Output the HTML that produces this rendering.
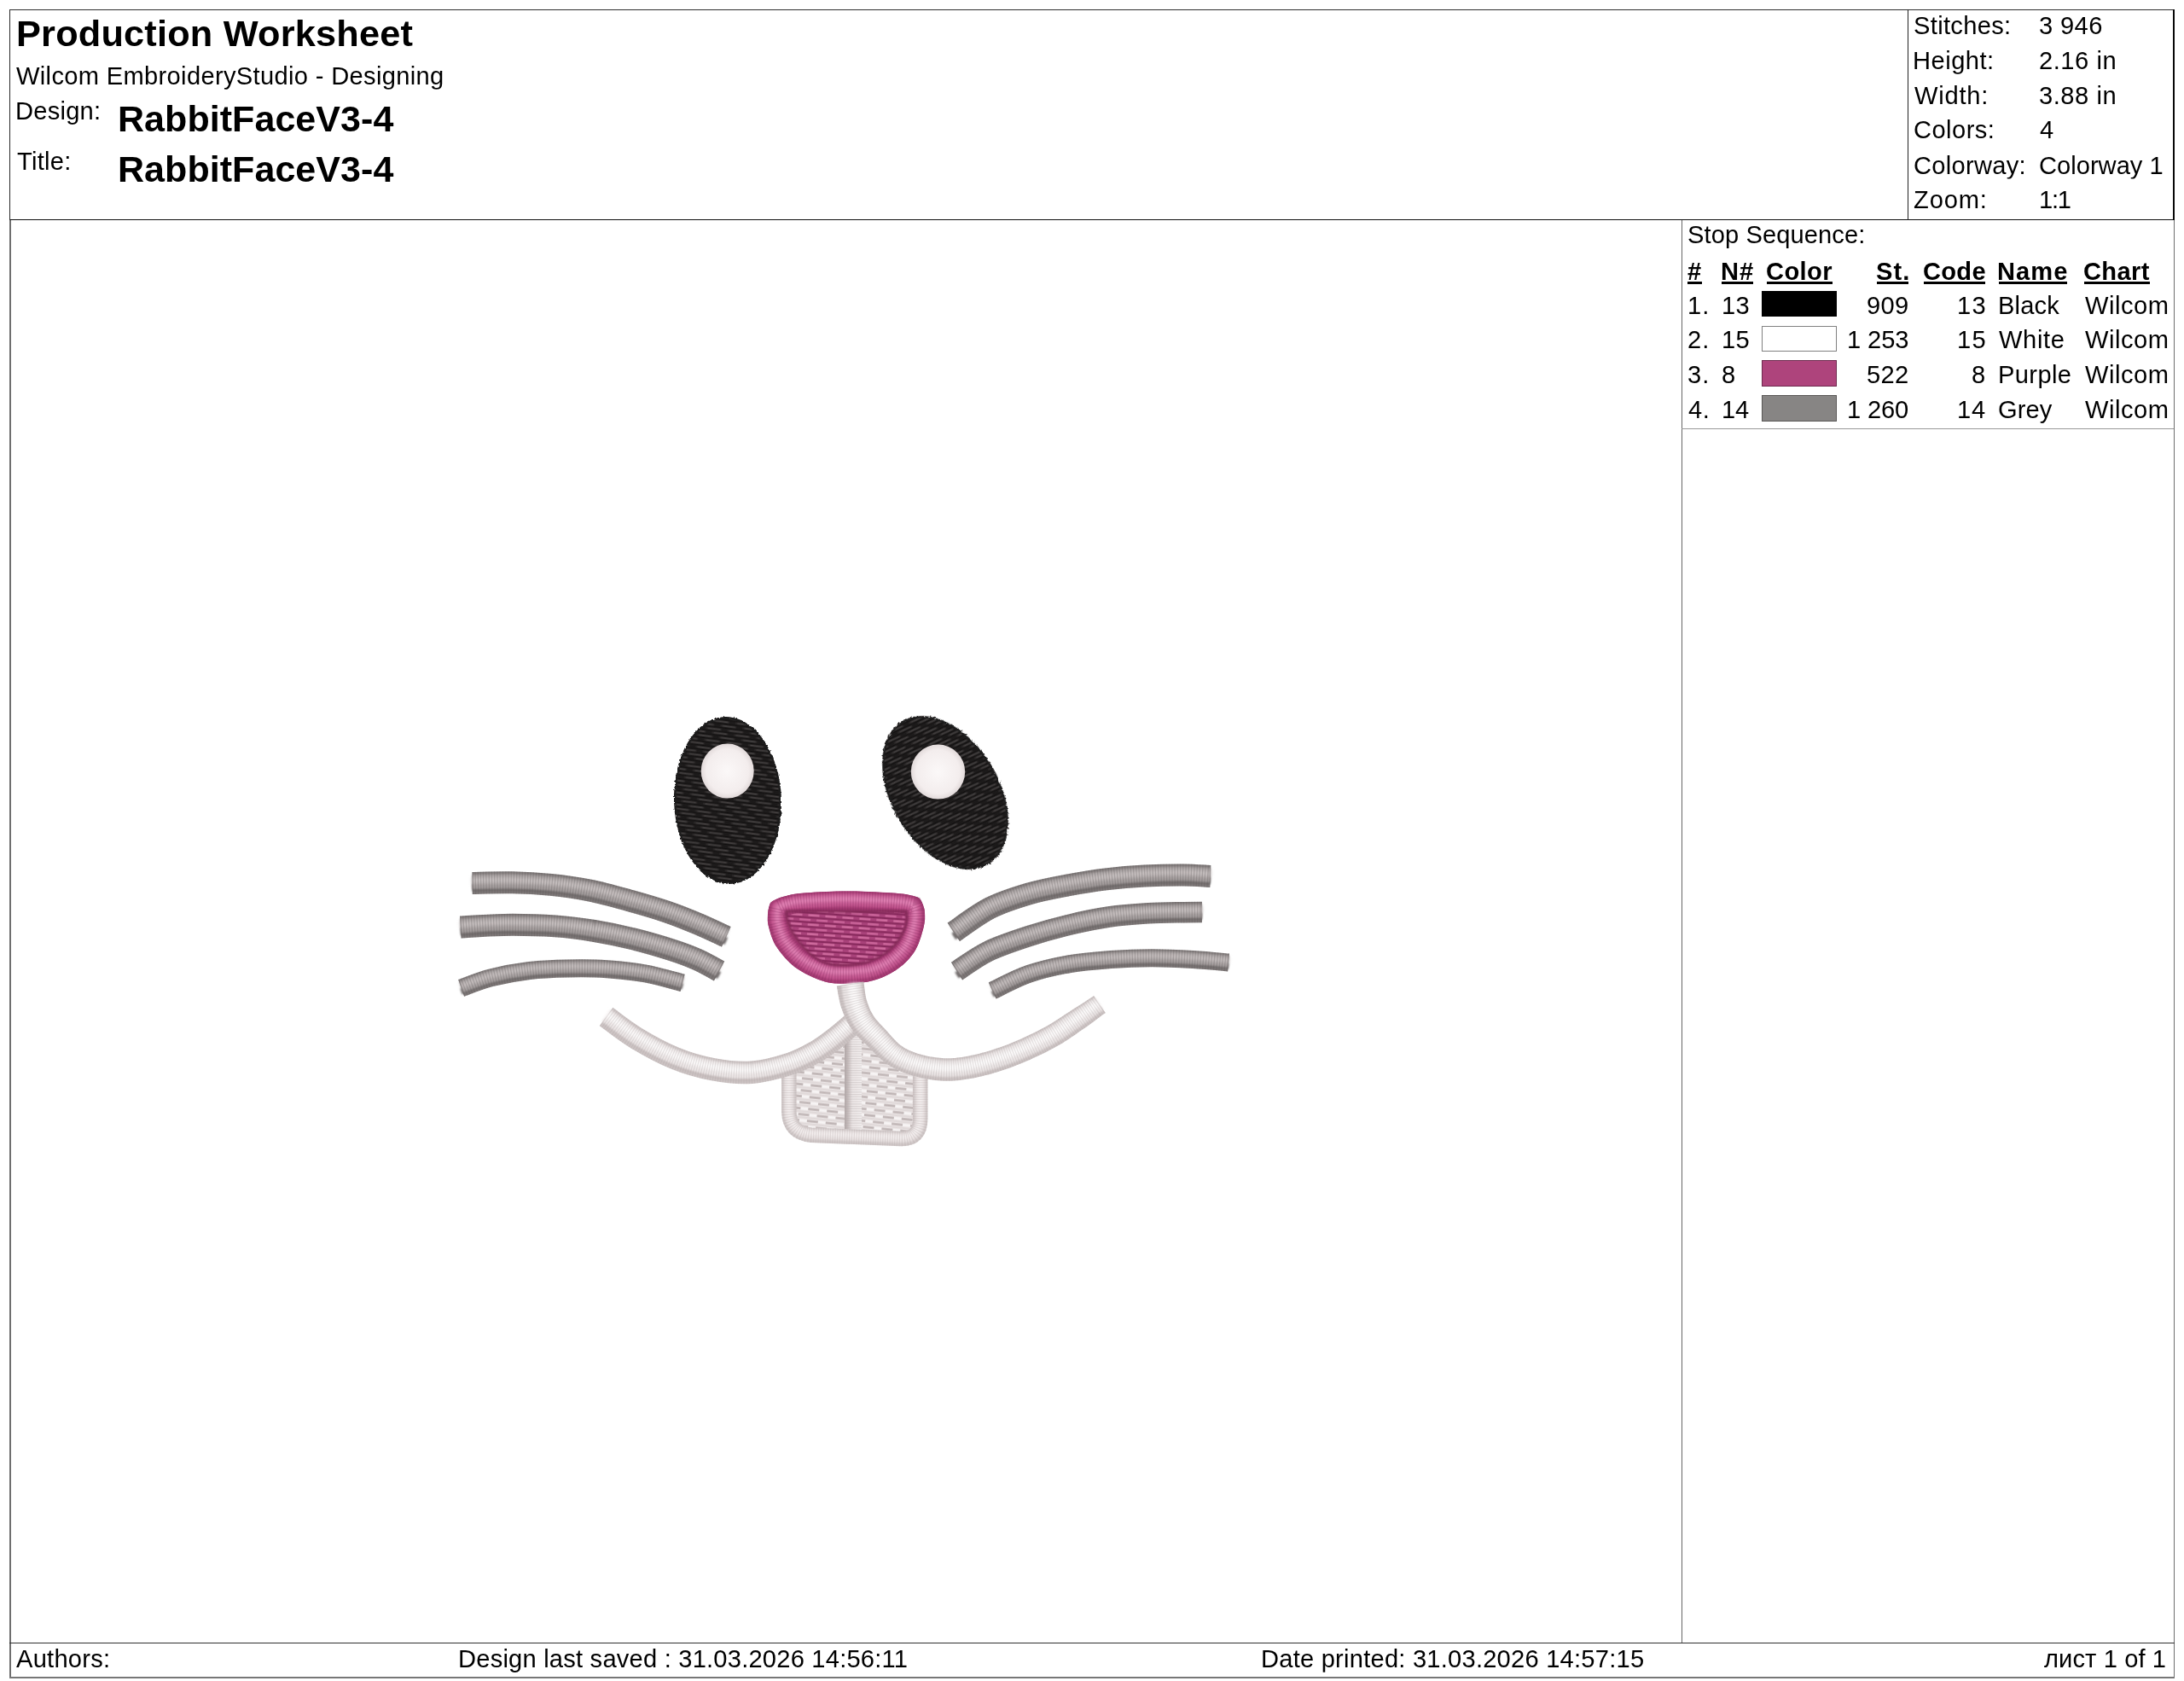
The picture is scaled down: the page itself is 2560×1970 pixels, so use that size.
<!DOCTYPE html>
<html lang="en">
<head>
<meta charset="utf-8">
<title>Production Worksheet</title>
<style>
html,body{margin:0;padding:0;background:#fff;}
body{width:2560px;height:1970px;position:relative;overflow:hidden;font-family:"Liberation Sans",Arial,sans-serif;color:#000;}
.t{position:absolute;line-height:1;white-space:pre;will-change:transform;}
.ln{position:absolute;background:#222;}
.sw{position:absolute;left:2065.4px;width:87.7px;height:30.6px;border:1.2px solid #000;box-sizing:border-box;}
svg.design{position:absolute;left:0;top:0;}
</style>
</head>
<body>
<!-- frame lines -->
<div class="ln" style="left:10.9px;top:10.85px;width:2538.1px;height:1.4px;background:#2e2e2e"></div>
<div class="ln" style="left:10.9px;top:256.6px;width:2538.1px;height:1.5px;background:#0c0c0c"></div>
<div class="ln" style="left:10.9px;top:10.85px;width:1.5px;height:247px;background:#2a2a2a"></div>
<div class="ln" style="left:2547.45px;top:10.85px;width:1.5px;height:247px;background:#080808"></div>
<div class="ln" style="left:2235.7px;top:10.85px;width:1.5px;height:247px;background:#222"></div>
<div class="ln" style="left:11.2px;top:258px;width:1.4px;height:1708.6px;background:#6e6e6e"></div>
<div class="ln" style="left:2547.7px;top:258px;width:1.4px;height:1708.6px;background:#6e6e6e"></div>
<div class="ln" style="left:1970.55px;top:258px;width:1.4px;height:1667px;background:#666"></div>
<div class="ln" style="left:1971px;top:501.8px;width:577px;height:1.3px;background:#999"></div>
<div class="ln" style="left:11.2px;top:1924.85px;width:2537.9px;height:1.5px;background:#2e2e2e"></div>
<div class="ln" style="left:11.2px;top:1964.95px;width:2537.9px;height:1.7px;background:#777"></div>
<!-- text -->
<div class="t" style="top:18px;font-size:43.3px;transform:translateY(0.45px);left:18.53px;font-weight:bold;letter-spacing:0.199px;">Production Worksheet</div>
<div class="t" style="top:74px;font-size:29.1px;transform:translateY(0.70px);left:19.33px;letter-spacing:0.333px;">Wilcom EmbroideryStudio - Designing</div>
<div class="t" style="top:115px;font-size:29.1px;transform:translateY(0.90px);left:18.19px;letter-spacing:0.246px;">Design:</div>
<div class="t" style="top:118px;font-size:43.0px;transform:translateY(0.30px);left:137.58px;font-weight:bold;letter-spacing:0.055px;">RabbitFaceV3-4</div>
<div class="t" style="top:175px;font-size:29.1px;left:20.42px;letter-spacing:0.250px;">Title:</div>
<div class="t" style="top:177px;font-size:43.0px;transform:translateY(0.20px);left:137.58px;font-weight:bold;letter-spacing:0.055px;">RabbitFaceV3-4</div>
<div class="t" style="top:16px;font-size:29.1px;left:2242.74px;letter-spacing:0.321px;">Stitches:</div>
<div class="t" style="top:16px;font-size:29.1px;left:2389.74px;letter-spacing:0.387px;">3 946</div>
<div class="t" style="top:56px;font-size:29.1px;transform:translateY(0.80px);left:2242.19px;letter-spacing:0.494px;">Height:</div>
<div class="t" style="top:56px;font-size:29.1px;transform:translateY(0.80px);left:2389.56px;letter-spacing:0.541px;">2.16 in</div>
<div class="t" style="top:97px;font-size:29.1px;transform:translateY(0.50px);left:2243.93px;letter-spacing:0.771px;">Width:</div>
<div class="t" style="top:97px;font-size:29.1px;transform:translateY(0.50px);left:2389.74px;letter-spacing:0.551px;">3.88 in</div>
<div class="t" style="top:138px;font-size:29.1px;transform:translateY(0.40px);left:2242.78px;letter-spacing:0.463px;">Colors:</div>
<div class="t" style="top:138px;font-size:29.1px;transform:translateY(0.40px);left:2390.98px;">4</div>
<div class="t" style="top:179px;font-size:29.1px;transform:translateY(0.50px);left:2242.78px;letter-spacing:0.295px;">Colorway:</div>
<div class="t" style="top:179px;font-size:29.1px;transform:translateY(0.50px);left:2390.38px;letter-spacing:0.018px;">Colorway 1</div>
<div class="t" style="top:220px;font-size:29.1px;left:2243.04px;letter-spacing:0.855px;">Zoom:</div>
<div class="t" style="top:220px;font-size:29.1px;left:2390.28px;letter-spacing:-1.197px;">1:1</div>
<div class="t" style="top:261px;font-size:29.1px;transform:translateY(0.20px);left:1977.54px;letter-spacing:0.099px;">Stop Sequence:</div>
<div class="t u" style="top:303px;font-size:29.1px;transform:translateY(0.90px);left:1977.87px;font-weight:bold;">#</div>
<div class="ln" style="left:1978.0px;top:329.8px;width:16.9px;height:3px;background:#000"></div>
<div class="t u" style="top:303px;font-size:29.1px;transform:translateY(0.90px);left:2017.20px;font-weight:bold;letter-spacing:1.035px;">N#</div>
<div class="ln" style="left:2018.2px;top:329.8px;width:37.0px;height:3px;background:#000"></div>
<div class="t u" style="top:303px;font-size:29.1px;transform:translateY(0.90px);left:2070.45px;font-weight:bold;letter-spacing:0.390px;">Color</div>
<div class="ln" style="left:2070.7px;top:329.8px;width:77.0px;height:3px;background:#000"></div>
<div class="t u" style="top:303px;font-size:29.1px;transform:translateY(0.90px);left:2198.94px;font-weight:bold;letter-spacing:1.018px;">St.</div>
<div class="ln" style="left:2199.6px;top:329.8px;width:37.0px;height:3px;background:#000"></div>
<div class="t u" style="top:303px;font-size:29.1px;transform:translateY(0.90px);left:2254.25px;font-weight:bold;letter-spacing:0.283px;">Code</div>
<div class="ln" style="left:2254.9px;top:329.8px;width:72.3px;height:3px;background:#000"></div>
<div class="t u" style="top:303px;font-size:29.1px;transform:translateY(0.90px);left:2341.20px;font-weight:bold;letter-spacing:1.041px;">Name</div>
<div class="ln" style="left:2342.7px;top:329.8px;width:80.4px;height:3px;background:#000"></div>
<div class="t u" style="top:303px;font-size:29.1px;transform:translateY(0.90px);left:2441.85px;font-weight:bold;letter-spacing:0.358px;">Chart</div>
<div class="ln" style="left:2442.8px;top:329.8px;width:77.0px;height:3px;background:#000"></div>
<div class="t" style="top:343px;font-size:29.1px;transform:translateY(0.60px);left:1977.68px;letter-spacing:0.965px;">1.</div>
<div class="t" style="top:343px;font-size:29.1px;transform:translateY(0.60px);left:2018.48px;letter-spacing:0.331px;">13</div>
<div class="t" style="top:343px;font-size:29.1px;transform:translateY(0.60px);left:2188.18px;letter-spacing:0.337px;">909</div>
<div class="t" style="top:343px;font-size:29.1px;transform:translateY(0.60px);left:2294.28px;letter-spacing:1.331px;">13</div>
<div class="t" style="top:343px;font-size:29.1px;transform:translateY(0.60px);left:2342.19px;letter-spacing:0.151px;">Black</div>
<div class="t" style="top:343px;font-size:29.1px;transform:translateY(0.60px);left:2443.93px;letter-spacing:0.518px;">Wilcom</div>
<div class="t" style="top:384px;font-size:29.1px;transform:translateY(0.20px);left:1977.76px;letter-spacing:1.082px;">2.</div>
<div class="t" style="top:384px;font-size:29.1px;transform:translateY(0.20px);left:2018.48px;letter-spacing:0.280px;">15</div>
<div class="t" style="top:384px;font-size:29.1px;transform:translateY(0.20px);left:2165.08px;letter-spacing:-0.078px;">1 253</div>
<div class="t" style="top:384px;font-size:29.1px;transform:translateY(0.20px);left:2294.28px;letter-spacing:1.280px;">15</div>
<div class="t" style="top:384px;font-size:29.1px;transform:translateY(0.20px);left:2343.33px;letter-spacing:0.652px;">White</div>
<div class="t" style="top:384px;font-size:29.1px;transform:translateY(0.20px);left:2443.93px;letter-spacing:0.518px;">Wilcom</div>
<div class="t" style="top:425px;font-size:29.1px;left:1977.94px;letter-spacing:1.145px;">3.</div>
<div class="t" style="top:425px;font-size:29.1px;left:2017.91px;">8</div>
<div class="t" style="top:425px;font-size:29.1px;left:2188.00px;letter-spacing:0.359px;">522</div>
<div class="t" style="top:425px;font-size:29.1px;left:2310.91px;">8</div>
<div class="t" style="top:425px;font-size:29.1px;left:2342.19px;letter-spacing:0.384px;">Purple</div>
<div class="t" style="top:425px;font-size:29.1px;left:2443.93px;letter-spacing:0.518px;">Wilcom</div>
<div class="t" style="top:465px;font-size:29.1px;transform:translateY(0.90px);left:1978.58px;letter-spacing:0.592px;">4.</div>
<div class="t" style="top:465px;font-size:29.1px;transform:translateY(0.90px);left:2018.48px;letter-spacing:-0.198px;">14</div>
<div class="t" style="top:465px;font-size:29.1px;transform:translateY(0.90px);left:2165.08px;letter-spacing:-0.160px;">1 260</div>
<div class="t" style="top:465px;font-size:29.1px;transform:translateY(0.90px);left:2294.28px;letter-spacing:0.802px;">14</div>
<div class="t" style="top:465px;font-size:29.1px;transform:translateY(0.90px);left:2341.61px;letter-spacing:0.058px;">Grey</div>
<div class="t" style="top:465px;font-size:29.1px;transform:translateY(0.90px);left:2443.93px;letter-spacing:0.518px;">Wilcom</div>
<div class="t" style="top:1929px;font-size:29.1px;transform:translateY(0.70px);left:18.94px;letter-spacing:0.248px;">Authors:</div>
<div class="t" style="top:1929px;font-size:29.1px;transform:translateY(0.70px);left:537.39px;letter-spacing:0.218px;">Design last saved : 31.03.2026 14:56:11</div>
<div class="t" style="top:1929px;font-size:29.1px;transform:translateY(0.70px);left:1478.19px;letter-spacing:0.233px;">Date printed: 31.03.2026 14:57:15</div>
<div class="t" style="top:1929px;font-size:29.1px;transform:translateY(0.70px);left:2396.47px;letter-spacing:0.097px;">лист 1 of 1</div>
<!-- swatches -->
<div class="sw" style="top:340.6px;background:#000000;border-color:#000000"></div>
<div class="sw" style="top:381.5px;background:#ffffff;border-color:#808080"></div>
<div class="sw" style="top:422.1px;background:#ae447c;border-color:#6e2a4e"></div>
<div class="sw" style="top:463.05px;background:#878584;border-color:#595756"></div>
<!-- design -->
<svg class="design" width="2560" height="1970" viewBox="0 0 2560 1970">
<defs>
<filter id="b2" filterUnits="userSpaceOnUse" x="480" y="780" width="1040" height="620"><feGaussianBlur stdDeviation="2"/></filter>
<filter id="b1" filterUnits="userSpaceOnUse" x="480" y="780" width="1040" height="620"><feGaussianBlur stdDeviation="1"/></filter>
<filter id="rough" x="-5%" y="-5%" width="110%" height="110%"><feTurbulence type="fractalNoise" baseFrequency="0.4" numOctaves="1" seed="3" result="n"/><feDisplacementMap in="SourceGraphic" in2="n" scale="4" xChannelSelector="R" yChannelSelector="G"/></filter>
<pattern id="pe1" width="26" height="14" patternUnits="userSpaceOnUse" patternTransform="rotate(9)">
<rect width="26" height="14" fill="#2b2828"/>
<path d="M0 0 L26 0 M0 4.67 L26 4.67 M0 9.33 L26 9.33 M0 14 L26 14" stroke="#0f0d0d" stroke-width="1.7"/>
<path d="M2 2.3 L16 2.3 M11 7 L25 7 M-15 7 L-1 7 M20 11.7 L34 11.7 M-6 11.7 L8 11.7" stroke="#474343" stroke-width="1.5" stroke-linecap="round"/>
<path d="M18 2.3 L25 2.3 M1 7 L8 7 M10 11.7 L17 11.7" stroke="#1b1919" stroke-width="2.2"/>
</pattern>
<pattern id="pe2" width="26" height="14" patternUnits="userSpaceOnUse" patternTransform="rotate(6)">
<rect width="26" height="14" fill="#2b2828"/>
<path d="M0 0 L26 0 M0 4.67 L26 4.67 M0 9.33 L26 9.33 M0 14 L26 14" stroke="#0f0d0d" stroke-width="1.7"/>
<path d="M2 2.3 L16 2.3 M11 7 L25 7 M-15 7 L-1 7 M20 11.7 L34 11.7 M-6 11.7 L8 11.7" stroke="#474343" stroke-width="1.5" stroke-linecap="round"/>
<path d="M18 2.3 L25 2.3 M1 7 L8 7 M10 11.7 L17 11.7" stroke="#1b1919" stroke-width="2.2"/>
</pattern>
<pattern id="pn" width="20" height="11" patternUnits="userSpaceOnUse" patternTransform="rotate(4)">
<rect width="20" height="11" fill="#a9427a"/>
<path d="M0 2.7 L13 2.7" stroke="#d06c9f" stroke-width="2.4"/><path d="M10 8.2 L23 8.2 M-10 8.2 L3 8.2" stroke="#ca6499" stroke-width="2.4"/>
<path d="M0 5.5 L20 5.5 M0 0 L20 0 M0 11 L20 11" stroke="#87295c" stroke-width="1.8"/>
</pattern>
<pattern id="pt" width="22" height="14" patternUnits="userSpaceOnUse" patternTransform="rotate(6)">
<rect width="22" height="14" fill="#ebe5e5"/>
<path d="M0 3.5 L13 3.5" stroke="#bbb1b1" stroke-width="2.4"/><path d="M11 10.5 L24 10.5 M-11 10.5 L2 10.5" stroke="#c0b6b6" stroke-width="2.4"/>
<path d="M13 3.5 L22 3.5 M2 10.5 L11 10.5" stroke="#f8f5f5" stroke-width="2.4"/>
<path d="M0 0 L22 0 M0 7 L22 7 M0 14 L22 14" stroke="#d6cece" stroke-width="1.2"/>
</pattern>
<linearGradient id="dv" x1="0" y1="0" x2="1" y2="0"><stop offset="0" stop-color="#b1a7a7"/><stop offset="0.22" stop-color="#c9c0c0"/><stop offset="0.45" stop-color="#ece6e6"/><stop offset="1" stop-color="#f3efef"/></linearGradient>
<radialGradient id="hl" cx="50%" cy="50%" r="50%"><stop offset="0" stop-color="#fbf8f8"/><stop offset="0.8" stop-color="#f3eded"/><stop offset="1" stop-color="#e2dada"/></radialGradient>
</defs>
<g filter="url(#rough)">
<ellipse cx="853" cy="938" rx="63" ry="98" fill="#1f1d1d" transform="rotate(-2 853 938)"/>
<ellipse cx="1108" cy="929" rx="63" ry="98" fill="#1f1d1d" transform="rotate(-31 1108 929)"/>
</g>
<ellipse cx="853" cy="938" rx="60.5" ry="95.5" fill="url(#pe1)" transform="rotate(-2 853 938)"/>
<ellipse cx="1108" cy="929" rx="60.5" ry="95.5" fill="url(#pe2)" transform="rotate(-31 1108 929)"/>
<ellipse cx="852.7" cy="903.6" rx="31" ry="32" fill="url(#hl)"/>
<ellipse cx="1099.5" cy="904.6" rx="31.7" ry="32" fill="url(#hl)"/>
<path d="M553.6 1034.9C561.4 1034.8 585.0 1034.0 600.4 1034.3C615.8 1034.6 630.7 1035.4 645.8 1036.9C660.9 1038.4 676.0 1040.5 691.1 1043.5C706.2 1046.5 721.3 1050.8 736.4 1055.0C751.5 1059.2 767.9 1063.9 781.8 1068.6C795.6 1073.3 807.9 1078.4 819.5 1083.3C831.1 1088.2 846.0 1095.5 851.3 1097.9" fill="none" stroke="#7f7979" stroke-width="26"/>
<path d="M553.6 1034.9C561.4 1034.8 585.0 1034.0 600.4 1034.3C615.8 1034.6 630.7 1035.4 645.8 1036.9C660.9 1038.4 676.0 1040.5 691.1 1043.5C706.2 1046.5 721.3 1050.8 736.4 1055.0C751.5 1059.2 767.9 1063.9 781.8 1068.6C795.6 1073.3 807.9 1078.4 819.5 1083.3C831.1 1088.2 846.0 1095.5 851.3 1097.9" fill="none" stroke="#6c6666" stroke-width="8.8" transform="translate(0,5.2)" filter="url(#b1)"/>
<path d="M553.6 1034.9C561.4 1034.8 585.0 1034.0 600.4 1034.3C615.8 1034.6 630.7 1035.4 645.8 1036.9C660.9 1038.4 676.0 1040.5 691.1 1043.5C706.2 1046.5 721.3 1050.8 736.4 1055.0C751.5 1059.2 767.9 1063.9 781.8 1068.6C795.6 1073.3 807.9 1078.4 819.5 1083.3C831.1 1088.2 846.0 1095.5 851.3 1097.9" fill="none" stroke="#a29b9b" stroke-width="17.2" transform="translate(0,-1.4)" filter="url(#b1)"/>
<path d="M553.6 1034.9C561.4 1034.8 585.0 1034.0 600.4 1034.3C615.8 1034.6 630.7 1035.4 645.8 1036.9C660.9 1038.4 676.0 1040.5 691.1 1043.5C706.2 1046.5 721.3 1050.8 736.4 1055.0C751.5 1059.2 767.9 1063.9 781.8 1068.6C795.6 1073.3 807.9 1078.4 819.5 1083.3C831.1 1088.2 846.0 1095.5 851.3 1097.9" fill="none" stroke="#c6bfbf" stroke-width="7.8" transform="translate(0,-3.0)" filter="url(#b2)"/>
<path d="M553.6 1034.9C561.4 1034.8 585.0 1034.0 600.4 1034.3C615.8 1034.6 630.7 1035.4 645.8 1036.9C660.9 1038.4 676.0 1040.5 691.1 1043.5C706.2 1046.5 721.3 1050.8 736.4 1055.0C751.5 1059.2 767.9 1063.9 781.8 1068.6C795.6 1073.3 807.9 1078.4 819.5 1083.3C831.1 1088.2 846.0 1095.5 851.3 1097.9" fill="none" stroke="#5a5454" stroke-opacity="0.26" stroke-width="26" stroke-dasharray="1.3 1.9"/>
<path d="M539.8 1086.6C548.2 1086.1 571.9 1084.1 590.4 1083.9C608.9 1083.7 633.3 1084.2 650.9 1085.4C668.5 1086.6 681.1 1088.4 696.2 1090.9C711.3 1093.4 726.4 1096.5 741.5 1100.2C756.6 1103.9 774.3 1109.1 786.9 1113.1C799.5 1117.1 807.7 1120.2 817.1 1124.4C826.5 1128.6 838.8 1135.7 843.1 1138.0" fill="none" stroke="#7f7979" stroke-width="26"/>
<path d="M539.8 1086.6C548.2 1086.1 571.9 1084.1 590.4 1083.9C608.9 1083.7 633.3 1084.2 650.9 1085.4C668.5 1086.6 681.1 1088.4 696.2 1090.9C711.3 1093.4 726.4 1096.5 741.5 1100.2C756.6 1103.9 774.3 1109.1 786.9 1113.1C799.5 1117.1 807.7 1120.2 817.1 1124.4C826.5 1128.6 838.8 1135.7 843.1 1138.0" fill="none" stroke="#6c6666" stroke-width="8.8" transform="translate(0,5.2)" filter="url(#b1)"/>
<path d="M539.8 1086.6C548.2 1086.1 571.9 1084.1 590.4 1083.9C608.9 1083.7 633.3 1084.2 650.9 1085.4C668.5 1086.6 681.1 1088.4 696.2 1090.9C711.3 1093.4 726.4 1096.5 741.5 1100.2C756.6 1103.9 774.3 1109.1 786.9 1113.1C799.5 1117.1 807.7 1120.2 817.1 1124.4C826.5 1128.6 838.8 1135.7 843.1 1138.0" fill="none" stroke="#a29b9b" stroke-width="17.2" transform="translate(0,-1.4)" filter="url(#b1)"/>
<path d="M539.8 1086.6C548.2 1086.1 571.9 1084.1 590.4 1083.9C608.9 1083.7 633.3 1084.2 650.9 1085.4C668.5 1086.6 681.1 1088.4 696.2 1090.9C711.3 1093.4 726.4 1096.5 741.5 1100.2C756.6 1103.9 774.3 1109.1 786.9 1113.1C799.5 1117.1 807.7 1120.2 817.1 1124.4C826.5 1128.6 838.8 1135.7 843.1 1138.0" fill="none" stroke="#c6bfbf" stroke-width="7.8" transform="translate(0,-3.0)" filter="url(#b2)"/>
<path d="M539.8 1086.6C548.2 1086.1 571.9 1084.1 590.4 1083.9C608.9 1083.7 633.3 1084.2 650.9 1085.4C668.5 1086.6 681.1 1088.4 696.2 1090.9C711.3 1093.4 726.4 1096.5 741.5 1100.2C756.6 1103.9 774.3 1109.1 786.9 1113.1C799.5 1117.1 807.7 1120.2 817.1 1124.4C826.5 1128.6 838.8 1135.7 843.1 1138.0" fill="none" stroke="#5a5454" stroke-opacity="0.26" stroke-width="26" stroke-dasharray="1.3 1.9"/>
<path d="M540.6 1157.9C546.4 1155.9 561.9 1149.3 575.3 1145.9C588.6 1142.5 605.6 1139.3 620.7 1137.5C635.8 1135.7 650.9 1135.3 666.0 1135.0C681.1 1134.7 696.2 1134.7 711.3 1135.7C726.4 1136.7 741.9 1138.3 756.7 1141.0C771.5 1143.7 793.0 1150.1 800.2 1151.9" fill="none" stroke="#7f7979" stroke-width="21"/>
<path d="M540.6 1157.9C546.4 1155.9 561.9 1149.3 575.3 1145.9C588.6 1142.5 605.6 1139.3 620.7 1137.5C635.8 1135.7 650.9 1135.3 666.0 1135.0C681.1 1134.7 696.2 1134.7 711.3 1135.7C726.4 1136.7 741.9 1138.3 756.7 1141.0C771.5 1143.7 793.0 1150.1 800.2 1151.9" fill="none" stroke="#6c6666" stroke-width="7.1" transform="translate(0,4.2)" filter="url(#b1)"/>
<path d="M540.6 1157.9C546.4 1155.9 561.9 1149.3 575.3 1145.9C588.6 1142.5 605.6 1139.3 620.7 1137.5C635.8 1135.7 650.9 1135.3 666.0 1135.0C681.1 1134.7 696.2 1134.7 711.3 1135.7C726.4 1136.7 741.9 1138.3 756.7 1141.0C771.5 1143.7 793.0 1150.1 800.2 1151.9" fill="none" stroke="#a29b9b" stroke-width="13.9" transform="translate(0,-1.1)" filter="url(#b1)"/>
<path d="M540.6 1157.9C546.4 1155.9 561.9 1149.3 575.3 1145.9C588.6 1142.5 605.6 1139.3 620.7 1137.5C635.8 1135.7 650.9 1135.3 666.0 1135.0C681.1 1134.7 696.2 1134.7 711.3 1135.7C726.4 1136.7 741.9 1138.3 756.7 1141.0C771.5 1143.7 793.0 1150.1 800.2 1151.9" fill="none" stroke="#c6bfbf" stroke-width="6.3" transform="translate(0,-2.5)" filter="url(#b2)"/>
<path d="M540.6 1157.9C546.4 1155.9 561.9 1149.3 575.3 1145.9C588.6 1142.5 605.6 1139.3 620.7 1137.5C635.8 1135.7 650.9 1135.3 666.0 1135.0C681.1 1134.7 696.2 1134.7 711.3 1135.7C726.4 1136.7 741.9 1138.3 756.7 1141.0C771.5 1143.7 793.0 1150.1 800.2 1151.9" fill="none" stroke="#5a5454" stroke-opacity="0.26" stroke-width="21" stroke-dasharray="1.3 1.9"/>
<path d="M1117.8 1092.3C1124.9 1087.6 1145.7 1071.7 1160.4 1064.2C1175.1 1056.7 1190.7 1052.0 1205.8 1047.5C1220.9 1043.0 1236.0 1040.3 1251.1 1037.5C1266.2 1034.7 1281.3 1032.2 1296.4 1030.4C1311.5 1028.6 1326.7 1027.3 1341.8 1026.5C1356.9 1025.7 1374.3 1025.3 1387.1 1025.4C1399.9 1025.5 1413.5 1026.7 1418.8 1026.9" fill="none" stroke="#7f7979" stroke-width="26"/>
<path d="M1117.8 1092.3C1124.9 1087.6 1145.7 1071.7 1160.4 1064.2C1175.1 1056.7 1190.7 1052.0 1205.8 1047.5C1220.9 1043.0 1236.0 1040.3 1251.1 1037.5C1266.2 1034.7 1281.3 1032.2 1296.4 1030.4C1311.5 1028.6 1326.7 1027.3 1341.8 1026.5C1356.9 1025.7 1374.3 1025.3 1387.1 1025.4C1399.9 1025.5 1413.5 1026.7 1418.8 1026.9" fill="none" stroke="#6c6666" stroke-width="8.8" transform="translate(0,5.2)" filter="url(#b1)"/>
<path d="M1117.8 1092.3C1124.9 1087.6 1145.7 1071.7 1160.4 1064.2C1175.1 1056.7 1190.7 1052.0 1205.8 1047.5C1220.9 1043.0 1236.0 1040.3 1251.1 1037.5C1266.2 1034.7 1281.3 1032.2 1296.4 1030.4C1311.5 1028.6 1326.7 1027.3 1341.8 1026.5C1356.9 1025.7 1374.3 1025.3 1387.1 1025.4C1399.9 1025.5 1413.5 1026.7 1418.8 1026.9" fill="none" stroke="#a29b9b" stroke-width="17.2" transform="translate(0,-1.4)" filter="url(#b1)"/>
<path d="M1117.8 1092.3C1124.9 1087.6 1145.7 1071.7 1160.4 1064.2C1175.1 1056.7 1190.7 1052.0 1205.8 1047.5C1220.9 1043.0 1236.0 1040.3 1251.1 1037.5C1266.2 1034.7 1281.3 1032.2 1296.4 1030.4C1311.5 1028.6 1326.7 1027.3 1341.8 1026.5C1356.9 1025.7 1374.3 1025.3 1387.1 1025.4C1399.9 1025.5 1413.5 1026.7 1418.8 1026.9" fill="none" stroke="#c6bfbf" stroke-width="7.8" transform="translate(0,-3.0)" filter="url(#b2)"/>
<path d="M1117.8 1092.3C1124.9 1087.6 1145.7 1071.7 1160.4 1064.2C1175.1 1056.7 1190.7 1052.0 1205.8 1047.5C1220.9 1043.0 1236.0 1040.3 1251.1 1037.5C1266.2 1034.7 1281.3 1032.2 1296.4 1030.4C1311.5 1028.6 1326.7 1027.3 1341.8 1026.5C1356.9 1025.7 1374.3 1025.3 1387.1 1025.4C1399.9 1025.5 1413.5 1026.7 1418.8 1026.9" fill="none" stroke="#5a5454" stroke-opacity="0.26" stroke-width="26" stroke-dasharray="1.3 1.9"/>
<path d="M1121.5 1138.1C1127.6 1134.2 1144.0 1121.8 1158.1 1114.9C1172.2 1108.1 1190.2 1102.2 1206.2 1097.0C1222.2 1091.8 1238.6 1087.3 1254.2 1083.6C1269.8 1079.8 1284.7 1076.7 1300.0 1074.5C1315.3 1072.3 1331.5 1071.2 1346.0 1070.3C1360.5 1069.4 1376.5 1069.4 1387.0 1069.2C1397.5 1069.0 1405.3 1069.0 1409.0 1069.0" fill="none" stroke="#7f7979" stroke-width="24.5"/>
<path d="M1121.5 1138.1C1127.6 1134.2 1144.0 1121.8 1158.1 1114.9C1172.2 1108.1 1190.2 1102.2 1206.2 1097.0C1222.2 1091.8 1238.6 1087.3 1254.2 1083.6C1269.8 1079.8 1284.7 1076.7 1300.0 1074.5C1315.3 1072.3 1331.5 1071.2 1346.0 1070.3C1360.5 1069.4 1376.5 1069.4 1387.0 1069.2C1397.5 1069.0 1405.3 1069.0 1409.0 1069.0" fill="none" stroke="#6c6666" stroke-width="8.3" transform="translate(0,4.9)" filter="url(#b1)"/>
<path d="M1121.5 1138.1C1127.6 1134.2 1144.0 1121.8 1158.1 1114.9C1172.2 1108.1 1190.2 1102.2 1206.2 1097.0C1222.2 1091.8 1238.6 1087.3 1254.2 1083.6C1269.8 1079.8 1284.7 1076.7 1300.0 1074.5C1315.3 1072.3 1331.5 1071.2 1346.0 1070.3C1360.5 1069.4 1376.5 1069.4 1387.0 1069.2C1397.5 1069.0 1405.3 1069.0 1409.0 1069.0" fill="none" stroke="#a29b9b" stroke-width="16.2" transform="translate(0,-1.3)" filter="url(#b1)"/>
<path d="M1121.5 1138.1C1127.6 1134.2 1144.0 1121.8 1158.1 1114.9C1172.2 1108.1 1190.2 1102.2 1206.2 1097.0C1222.2 1091.8 1238.6 1087.3 1254.2 1083.6C1269.8 1079.8 1284.7 1076.7 1300.0 1074.5C1315.3 1072.3 1331.5 1071.2 1346.0 1070.3C1360.5 1069.4 1376.5 1069.4 1387.0 1069.2C1397.5 1069.0 1405.3 1069.0 1409.0 1069.0" fill="none" stroke="#c6bfbf" stroke-width="7.3" transform="translate(0,-2.9)" filter="url(#b2)"/>
<path d="M1121.5 1138.1C1127.6 1134.2 1144.0 1121.8 1158.1 1114.9C1172.2 1108.1 1190.2 1102.2 1206.2 1097.0C1222.2 1091.8 1238.6 1087.3 1254.2 1083.6C1269.8 1079.8 1284.7 1076.7 1300.0 1074.5C1315.3 1072.3 1331.5 1071.2 1346.0 1070.3C1360.5 1069.4 1376.5 1069.4 1387.0 1069.2C1397.5 1069.0 1405.3 1069.0 1409.0 1069.0" fill="none" stroke="#5a5454" stroke-opacity="0.26" stroke-width="24.5" stroke-dasharray="1.3 1.9"/>
<path d="M1163.2 1161.0C1170.4 1157.7 1191.0 1146.5 1206.2 1141.3C1221.4 1136.1 1238.2 1132.4 1254.2 1129.6C1270.2 1126.8 1286.3 1125.7 1302.3 1124.5C1318.3 1123.3 1334.4 1122.7 1350.4 1122.7C1366.4 1122.7 1383.5 1123.6 1398.5 1124.5C1413.5 1125.4 1433.2 1127.4 1440.1 1128.0" fill="none" stroke="#7f7979" stroke-width="21"/>
<path d="M1163.2 1161.0C1170.4 1157.7 1191.0 1146.5 1206.2 1141.3C1221.4 1136.1 1238.2 1132.4 1254.2 1129.6C1270.2 1126.8 1286.3 1125.7 1302.3 1124.5C1318.3 1123.3 1334.4 1122.7 1350.4 1122.7C1366.4 1122.7 1383.5 1123.6 1398.5 1124.5C1413.5 1125.4 1433.2 1127.4 1440.1 1128.0" fill="none" stroke="#6c6666" stroke-width="7.1" transform="translate(0,4.2)" filter="url(#b1)"/>
<path d="M1163.2 1161.0C1170.4 1157.7 1191.0 1146.5 1206.2 1141.3C1221.4 1136.1 1238.2 1132.4 1254.2 1129.6C1270.2 1126.8 1286.3 1125.7 1302.3 1124.5C1318.3 1123.3 1334.4 1122.7 1350.4 1122.7C1366.4 1122.7 1383.5 1123.6 1398.5 1124.5C1413.5 1125.4 1433.2 1127.4 1440.1 1128.0" fill="none" stroke="#a29b9b" stroke-width="13.9" transform="translate(0,-1.1)" filter="url(#b1)"/>
<path d="M1163.2 1161.0C1170.4 1157.7 1191.0 1146.5 1206.2 1141.3C1221.4 1136.1 1238.2 1132.4 1254.2 1129.6C1270.2 1126.8 1286.3 1125.7 1302.3 1124.5C1318.3 1123.3 1334.4 1122.7 1350.4 1122.7C1366.4 1122.7 1383.5 1123.6 1398.5 1124.5C1413.5 1125.4 1433.2 1127.4 1440.1 1128.0" fill="none" stroke="#c6bfbf" stroke-width="6.3" transform="translate(0,-2.5)" filter="url(#b2)"/>
<path d="M1163.2 1161.0C1170.4 1157.7 1191.0 1146.5 1206.2 1141.3C1221.4 1136.1 1238.2 1132.4 1254.2 1129.6C1270.2 1126.8 1286.3 1125.7 1302.3 1124.5C1318.3 1123.3 1334.4 1122.7 1350.4 1122.7C1366.4 1122.7 1383.5 1123.6 1398.5 1124.5C1413.5 1125.4 1433.2 1127.4 1440.1 1128.0" fill="none" stroke="#5a5454" stroke-opacity="0.26" stroke-width="21" stroke-dasharray="1.3 1.9"/>
<path d="M930 1252 L990 1215 L1010 1215 L1073 1256 L1073 1330 L930 1324 Z" fill="url(#pt)"/>
<rect x="990" y="1212" width="20" height="116" fill="url(#dv)"/>
<path d="M1000 1212 L1000 1328" fill="none" stroke="#b3a9a9" stroke-opacity="0.35" stroke-width="20" stroke-dasharray="1.2 1.6"/>
<path d="M924.8 1252 L924.8 1303 Q925.5 1328 951 1330.2 L1056 1334.6 Q1078.7 1335 1078.7 1311 L1078.7 1258" fill="none" stroke="#cfc7c7" stroke-width="17.5"/>
<path d="M924.8 1252 L924.8 1303 Q925.5 1328 951 1330.2 L1056 1334.6 Q1078.7 1335 1078.7 1311 L1078.7 1258" fill="none" stroke="#e6dfdf" stroke-width="11.6" transform="translate(0,-0.9)" filter="url(#b1)"/>
<path d="M924.8 1252 L924.8 1303 Q925.5 1328 951 1330.2 L1056 1334.6 Q1078.7 1335 1078.7 1311 L1078.7 1258" fill="none" stroke="#f7f3f3" stroke-width="5.2" transform="translate(0,-2.0)" filter="url(#b2)"/>
<path d="M924.8 1252 L924.8 1303 Q925.5 1328 951 1330.2 L1056 1334.6 Q1078.7 1335 1078.7 1311 L1078.7 1258" fill="none" stroke="#b9b0b0" stroke-opacity="0.35" stroke-width="17.5" stroke-dasharray="1.2 1.6"/>
<path d="M905.2 1056.3C908.2 1054.4 913.1 1052.1 919.5 1050.4C925.9 1048.8 930.4 1047.4 943.3 1046.4C956.2 1045.4 979.0 1044.3 996.9 1044.4C1014.8 1044.5 1038.0 1045.8 1050.5 1046.8C1063.0 1047.8 1067.2 1049.1 1071.9 1050.4C1076.7 1051.7 1077.0 1051.6 1079.0 1054.5C1081.0 1057.4 1083.2 1062.2 1083.8 1067.6C1084.4 1073.0 1084.6 1078.8 1082.6 1086.7C1080.6 1094.6 1077.2 1106.9 1071.9 1115.2C1066.6 1123.5 1059.0 1130.9 1050.5 1136.7C1042.0 1142.5 1031.6 1147.1 1020.7 1149.8C1009.8 1152.5 994.9 1152.9 985.0 1152.7C975.1 1152.5 970.1 1151.9 961.2 1148.6C952.3 1145.3 939.9 1139.6 931.4 1133.1C922.9 1126.5 915.0 1117.0 910.0 1109.3C905.0 1101.6 902.8 1092.8 901.1 1086.7C899.4 1080.6 899.8 1076.6 899.9 1072.4C900.0 1068.2 900.8 1064.4 901.7 1061.7C902.6 1059.0 902.2 1058.2 905.2 1056.3Z" fill="#a63c74"/>
<path d="M1062.4 1068.2L1062.4 1069.6L1062.5 1071.4L1062.7 1073.5L1062.8 1076.0L1062.8 1078.6L1062.5 1081.3L1062.0 1084.0L1061.2 1086.7L1060.0 1089.5L1058.6 1092.5L1056.9 1095.6L1054.9 1098.8L1052.8 1102.0L1050.6 1105.0L1048.2 1107.9L1045.7 1110.5L1043.1 1112.9L1040.2 1115.2L1037.2 1117.4L1034.1 1119.4L1030.8 1121.3L1027.5 1123.0L1024.1 1124.6L1020.7 1126.0L1017.2 1127.2L1013.6 1128.3L1009.9 1129.2L1006.2 1129.9L1002.4 1130.5L998.5 1131.0L994.7 1131.2L991.0 1131.3L987.2 1131.3L983.4 1131.1L979.6 1130.9L975.8 1130.4L972.0 1129.7L968.3 1128.8L964.7 1127.6L961.2 1126.0L957.8 1124.0L954.3 1121.5L950.9 1118.7L947.6 1115.7L944.4 1112.5L941.4 1109.3L938.7 1106.2L936.2 1103.3L934.0 1100.5L932.1 1097.7L930.4 1094.9L928.8 1092.1L927.5 1089.3L926.3 1086.7L925.2 1084.2L924.3 1081.9L923.5 1079.7L923.0 1077.5L922.6 1075.4L922.4 1073.4L922.2 1071.6L922.1 1070.0L922.0 1068.7L921.9 1067.6Z" fill="url(#pn)"/>
<path d="M912.4 1065.1L911.2 1070.9L911.1 1079.3L914.2 1091.6L918.3 1101.4L922.4 1107.5L927.8 1114.3L934.0 1120.6L938.2 1124.2L948.3 1130.6L957.0 1134.8L965.0 1138.1L971.2 1140.0L978.1 1141.2L998.2 1141.3L1015.2 1139.5L1020.9 1138.2L1029.3 1135.3L1037.1 1131.7L1044.2 1127.4L1050.6 1122.6L1056.3 1117.1L1061.1 1111.2L1063.6 1107.2L1065.9 1102.5L1068.8 1094.4L1071.7 1084.1L1072.9 1077.2L1072.5 1067.9L1070.2 1061.5L1060.2 1059.2L1045.6 1057.7L1002.2 1055.7L980.2 1055.8L957.8 1056.7L940.7 1057.9L931.0 1059.2L919.3 1062.1L912.4 1065.1Z" fill="none" stroke="#a63c74" stroke-width="22.4" stroke-linejoin="round"/>
<path d="M912.4 1065.1L911.2 1070.9L911.1 1079.3L914.2 1091.6L918.3 1101.4L922.4 1107.5L927.8 1114.3L934.0 1120.6L938.2 1124.2L948.3 1130.6L957.0 1134.8L965.0 1138.1L971.2 1140.0L978.1 1141.2L998.2 1141.3L1015.2 1139.5L1020.9 1138.2L1029.3 1135.3L1037.1 1131.7L1044.2 1127.4L1050.6 1122.6L1056.3 1117.1L1061.1 1111.2L1063.6 1107.2L1065.9 1102.5L1068.8 1094.4L1071.7 1084.1L1072.9 1077.2L1072.5 1067.9L1070.2 1061.5L1060.2 1059.2L1045.6 1057.7L1002.2 1055.7L980.2 1055.8L957.8 1056.7L940.7 1057.9L931.0 1059.2L919.3 1062.1L912.4 1065.1Z" fill="none" stroke="#c2548e" stroke-width="15.5" stroke-linejoin="round" transform="translate(0,-1)" filter="url(#b1)"/>
<path d="M912.4 1065.1L911.2 1070.9L911.1 1079.3L914.2 1091.6L918.3 1101.4L922.4 1107.5L927.8 1114.3L934.0 1120.6L938.2 1124.2L948.3 1130.6L957.0 1134.8L965.0 1138.1L971.2 1140.0L978.1 1141.2L998.2 1141.3L1015.2 1139.5L1020.9 1138.2L1029.3 1135.3L1037.1 1131.7L1044.2 1127.4L1050.6 1122.6L1056.3 1117.1L1061.1 1111.2L1063.6 1107.2L1065.9 1102.5L1068.8 1094.4L1071.7 1084.1L1072.9 1077.2L1072.5 1067.9L1070.2 1061.5L1060.2 1059.2L1045.6 1057.7L1002.2 1055.7L980.2 1055.8L957.8 1056.7L940.7 1057.9L931.0 1059.2L919.3 1062.1L912.4 1065.1Z" fill="none" stroke="#e283b5" stroke-width="6.5" stroke-linejoin="round" transform="translate(0,-2.2)" filter="url(#b2)"/>
<path d="M1062.4 1068.2L1062.4 1069.6L1062.5 1071.4L1062.7 1073.5L1062.8 1076.0L1062.8 1078.6L1062.5 1081.3L1062.0 1084.0L1061.2 1086.7L1060.0 1089.5L1058.6 1092.5L1056.9 1095.6L1054.9 1098.8L1052.8 1102.0L1050.6 1105.0L1048.2 1107.9L1045.7 1110.5L1043.1 1112.9L1040.2 1115.2L1037.2 1117.4L1034.1 1119.4L1030.8 1121.3L1027.5 1123.0L1024.1 1124.6L1020.7 1126.0L1017.2 1127.2L1013.6 1128.3L1009.9 1129.2L1006.2 1129.9L1002.4 1130.5L998.5 1131.0L994.7 1131.2L991.0 1131.3L987.2 1131.3L983.4 1131.1L979.6 1130.9L975.8 1130.4L972.0 1129.7L968.3 1128.8L964.7 1127.6L961.2 1126.0L957.8 1124.0L954.3 1121.5L950.9 1118.7L947.6 1115.7L944.4 1112.5L941.4 1109.3L938.7 1106.2L936.2 1103.3L934.0 1100.5L932.1 1097.7L930.4 1094.9L928.8 1092.1L927.5 1089.3L926.3 1086.7L925.2 1084.2L924.3 1081.9L923.5 1079.7L923.0 1077.5L922.6 1075.4L922.4 1073.4L922.2 1071.6L922.1 1070.0L922.0 1068.7L921.9 1067.6Z" fill="none" stroke="#7c2752" stroke-opacity="0.75" stroke-width="3.2" stroke-linejoin="round" filter="url(#b1)"/>
<path d="M912.4 1065.1L911.2 1070.9L911.1 1079.3L914.2 1091.6L918.3 1101.4L922.4 1107.5L927.8 1114.3L934.0 1120.6L938.2 1124.2L948.3 1130.6L957.0 1134.8L965.0 1138.1L971.2 1140.0L978.1 1141.2L998.2 1141.3L1015.2 1139.5L1020.9 1138.2L1029.3 1135.3L1037.1 1131.7L1044.2 1127.4L1050.6 1122.6L1056.3 1117.1L1061.1 1111.2L1063.6 1107.2L1065.9 1102.5L1068.8 1094.4L1071.7 1084.1L1072.9 1077.2L1072.5 1067.9L1070.2 1061.5L1060.2 1059.2L1045.6 1057.7L1002.2 1055.7L980.2 1055.8L957.8 1056.7L940.7 1057.9L931.0 1059.2L919.3 1062.1L912.4 1065.1Z" fill="none" stroke="#7d2558" stroke-opacity="0.26" stroke-width="22.4" stroke-dasharray="1.3 1.9"/>
<path d="M710.6 1191.4C716.4 1195.6 731.9 1208.2 745.3 1216.3C758.6 1224.4 775.6 1233.8 790.7 1240.0C805.8 1246.2 820.9 1250.5 836.0 1253.3C851.1 1256.1 866.2 1257.8 881.3 1256.7C896.4 1255.6 914.1 1250.6 926.7 1246.5C939.3 1242.4 948.1 1237.2 956.9 1232.2C965.7 1227.2 972.0 1222.1 979.5 1216.3C987.0 1210.5 998.2 1200.6 1002.0 1197.4" fill="none" stroke="#cdc4c4" stroke-width="26.5"/>
<path d="M710.6 1191.4C716.4 1195.6 731.9 1208.2 745.3 1216.3C758.6 1224.4 775.6 1233.8 790.7 1240.0C805.8 1246.2 820.9 1250.5 836.0 1253.3C851.1 1256.1 866.2 1257.8 881.3 1256.7C896.4 1255.6 914.1 1250.6 926.7 1246.5C939.3 1242.4 948.1 1237.2 956.9 1232.2C965.7 1227.2 972.0 1222.1 979.5 1216.3C987.0 1210.5 998.2 1200.6 1002.0 1197.4" fill="none" stroke="#c2b8b8" stroke-width="9.0" transform="translate(0,5.3)" filter="url(#b1)"/>
<path d="M710.6 1191.4C716.4 1195.6 731.9 1208.2 745.3 1216.3C758.6 1224.4 775.6 1233.8 790.7 1240.0C805.8 1246.2 820.9 1250.5 836.0 1253.3C851.1 1256.1 866.2 1257.8 881.3 1256.7C896.4 1255.6 914.1 1250.6 926.7 1246.5C939.3 1242.4 948.1 1237.2 956.9 1232.2C965.7 1227.2 972.0 1222.1 979.5 1216.3C987.0 1210.5 998.2 1200.6 1002.0 1197.4" fill="none" stroke="#ebe5e5" stroke-width="17.5" transform="translate(0,-1.4)" filter="url(#b1)"/>
<path d="M710.6 1191.4C716.4 1195.6 731.9 1208.2 745.3 1216.3C758.6 1224.4 775.6 1233.8 790.7 1240.0C805.8 1246.2 820.9 1250.5 836.0 1253.3C851.1 1256.1 866.2 1257.8 881.3 1256.7C896.4 1255.6 914.1 1250.6 926.7 1246.5C939.3 1242.4 948.1 1237.2 956.9 1232.2C965.7 1227.2 972.0 1222.1 979.5 1216.3C987.0 1210.5 998.2 1200.6 1002.0 1197.4" fill="none" stroke="#fcfafa" stroke-width="7.9" transform="translate(0,-3.1)" filter="url(#b2)"/>
<path d="M710.6 1191.4C716.4 1195.6 731.9 1208.2 745.3 1216.3C758.6 1224.4 775.6 1233.8 790.7 1240.0C805.8 1246.2 820.9 1250.5 836.0 1253.3C851.1 1256.1 866.2 1257.8 881.3 1256.7C896.4 1255.6 914.1 1250.6 926.7 1246.5C939.3 1242.4 948.1 1237.2 956.9 1232.2C965.7 1227.2 972.0 1222.1 979.5 1216.3C987.0 1210.5 998.2 1200.6 1002.0 1197.4" fill="none" stroke="#aea4a4" stroke-opacity="0.28" stroke-width="26.5" stroke-dasharray="1.2 1.7"/>
<clipPath id="cv"><path d="M980.8 1155.6L981.0 1156.6L981.2 1157.8L981.5 1159.4L981.8 1161.3L982.1 1163.4L982.5 1165.7L983.0 1168.1L983.5 1170.6L984.0 1173.2L984.6 1175.8L985.3 1178.4L986.1 1180.9L986.9 1183.1L987.7 1185.3L988.5 1187.5L989.4 1189.6L990.3 1191.8L991.3 1193.9L992.4 1196.1L993.5 1198.2L994.6 1200.3L995.8 1202.4L997.1 1204.4L998.5 1206.5L999.9 1208.5L1001.5 1210.4L1003.0 1212.2L1004.5 1213.9L1006.1 1215.6L1007.6 1217.1L1009.1 1218.6L1010.6 1220.0L1012.1 1221.4L1013.6 1222.8L1015.1 1224.1L1016.6 1225.6L1018.1 1227.1L1019.8 1228.7L1021.5 1230.4L1023.3 1232.3L1025.2 1234.2L1027.2 1236.2L1029.3 1238.2L1031.5 1240.2L1033.8 1242.2L1036.2 1244.2L1038.6 1246.1L1041.2 1247.8L1043.6 1249.4L1046.1 1250.8L1048.5 1252.2L1051.0 1253.4L1053.5 1254.6L1056.0 1255.7L1058.5 1256.8L1061.1 1257.7L1063.7 1258.6L1066.3 1259.5L1068.9 1260.3L1071.7 1261.1L1074.4 1261.8L1077.3 1262.5L1080.3 1263.2L1083.3 1263.8L1086.4 1264.4L1089.5 1265.0L1092.7 1265.4L1095.9 1265.9L1099.2 1266.2L1102.5 1266.5L1105.8 1266.7L1109.0 1266.7L1112.3 1266.7L1115.5 1266.7L1118.6 1266.5L1121.8 1266.3L1125.0 1266.0L1128.1 1265.6L1131.3 1265.1L1134.5 1264.6L1137.7 1264.1L1141.0 1263.4L1144.3 1262.8L1147.6 1262.0L1151.1 1261.2L1154.6 1260.3L1158.2 1259.4L1161.9 1258.4L1165.6 1257.3L1169.3 1256.2L1173.0 1255.0L1176.8 1253.8L1180.6 1252.5L1184.3 1251.2L1188.1 1249.8L1191.8 1248.3L1195.6 1246.8L1199.4 1245.3L1203.3 1243.6L1207.2 1241.9L1211.1 1240.1L1215.0 1238.3L1218.8 1236.5L1222.5 1234.7L1226.2 1232.9L1229.7 1231.1L1233.1 1229.3L1236.4 1227.6L1239.5 1225.8L1242.6 1224.1L1245.4 1222.4L1248.2 1220.6L1250.8 1219.0L1253.4 1217.3L1255.8 1215.6L1258.2 1214.0L1260.5 1212.4L1262.8 1210.8L1265.1 1209.1L1267.5 1207.5L1270.0 1205.8L1272.7 1203.9L1275.5 1201.9L1278.2 1199.9L1281.0 1197.9L1283.6 1195.9L1286.2 1194.0L1288.6 1192.2L1290.8 1190.6L1292.8 1189.1L1294.5 1187.9L1295.8 1186.9L1282.2 1167.1L1280.8 1168.0L1279.0 1169.2L1276.9 1170.5L1274.6 1172.0L1272.1 1173.7L1269.4 1175.4L1266.7 1177.2L1263.9 1179.0L1261.1 1180.8L1258.3 1182.6L1255.6 1184.3L1253.1 1185.9L1250.6 1187.5L1248.2 1189.1L1245.8 1190.7L1243.4 1192.2L1241.1 1193.8L1238.8 1195.3L1236.5 1196.8L1234.2 1198.3L1231.7 1199.7L1229.2 1201.2L1226.6 1202.7L1223.8 1204.2L1220.8 1205.8L1217.6 1207.5L1214.3 1209.2L1210.8 1210.9L1207.3 1212.6L1203.7 1214.3L1200.0 1216.0L1196.4 1217.7L1192.7 1219.3L1189.1 1220.8L1185.6 1222.3L1182.2 1223.7L1178.8 1225.0L1175.3 1226.2L1171.9 1227.5L1168.4 1228.6L1164.9 1229.8L1161.5 1230.9L1158.0 1231.9L1154.7 1232.9L1151.3 1233.8L1148.1 1234.7L1144.9 1235.5L1141.8 1236.2L1138.7 1236.8L1135.8 1237.5L1132.9 1238.0L1130.1 1238.5L1127.4 1238.9L1124.7 1239.3L1122.1 1239.6L1119.5 1239.9L1117.0 1240.1L1114.4 1240.2L1111.9 1240.2L1109.4 1240.3L1106.8 1240.2L1104.3 1240.0L1101.6 1239.8L1099.0 1239.6L1096.4 1239.2L1093.7 1238.8L1091.1 1238.4L1088.5 1237.9L1086.0 1237.4L1083.5 1236.8L1081.1 1236.2L1078.7 1235.5L1076.5 1234.9L1074.3 1234.2L1072.3 1233.5L1070.3 1232.8L1068.4 1232.0L1066.5 1231.3L1064.7 1230.4L1063.0 1229.6L1061.3 1228.7L1059.6 1227.7L1058.0 1226.6L1056.4 1225.6L1054.9 1224.4L1053.5 1223.2L1051.9 1221.8L1050.3 1220.2L1048.7 1218.6L1047.0 1216.8L1045.4 1215.0L1043.7 1213.1L1042.0 1211.2L1040.4 1209.3L1038.7 1207.5L1037.0 1205.6L1035.4 1203.9L1033.9 1202.3L1032.4 1200.8L1031.1 1199.4L1029.9 1198.1L1028.7 1196.8L1027.7 1195.6L1026.7 1194.4L1025.8 1193.3L1025.0 1192.2L1024.3 1191.1L1023.5 1189.9L1022.8 1188.6L1022.0 1187.3L1021.2 1185.8L1020.5 1184.4L1019.8 1182.9L1019.1 1181.3L1018.5 1179.7L1017.9 1178.1L1017.3 1176.5L1016.7 1174.9L1016.2 1173.2L1015.7 1171.7L1015.3 1170.3L1015.0 1168.7L1014.6 1166.9L1014.3 1164.9L1014.0 1162.9L1013.7 1160.8L1013.5 1158.8L1013.2 1156.9L1013.0 1155.0L1012.8 1153.3L1012.6 1151.7L1012.4 1150.4Z"/></clipPath>
<path d="M980.8 1155.6L981.0 1156.6L981.2 1157.8L981.5 1159.4L981.8 1161.3L982.1 1163.4L982.5 1165.7L983.0 1168.1L983.5 1170.6L984.0 1173.2L984.6 1175.8L985.3 1178.4L986.1 1180.9L986.9 1183.1L987.7 1185.3L988.5 1187.5L989.4 1189.6L990.3 1191.8L991.3 1193.9L992.4 1196.1L993.5 1198.2L994.6 1200.3L995.8 1202.4L997.1 1204.4L998.5 1206.5L999.9 1208.5L1001.5 1210.4L1003.0 1212.2L1004.5 1213.9L1006.1 1215.6L1007.6 1217.1L1009.1 1218.6L1010.6 1220.0L1012.1 1221.4L1013.6 1222.8L1015.1 1224.1L1016.6 1225.6L1018.1 1227.1L1019.8 1228.7L1021.5 1230.4L1023.3 1232.3L1025.2 1234.2L1027.2 1236.2L1029.3 1238.2L1031.5 1240.2L1033.8 1242.2L1036.2 1244.2L1038.6 1246.1L1041.2 1247.8L1043.6 1249.4L1046.1 1250.8L1048.5 1252.2L1051.0 1253.4L1053.5 1254.6L1056.0 1255.7L1058.5 1256.8L1061.1 1257.7L1063.7 1258.6L1066.3 1259.5L1068.9 1260.3L1071.7 1261.1L1074.4 1261.8L1077.3 1262.5L1080.3 1263.2L1083.3 1263.8L1086.4 1264.4L1089.5 1265.0L1092.7 1265.4L1095.9 1265.9L1099.2 1266.2L1102.5 1266.5L1105.8 1266.7L1109.0 1266.7L1112.3 1266.7L1115.5 1266.7L1118.6 1266.5L1121.8 1266.3L1125.0 1266.0L1128.1 1265.6L1131.3 1265.1L1134.5 1264.6L1137.7 1264.1L1141.0 1263.4L1144.3 1262.8L1147.6 1262.0L1151.1 1261.2L1154.6 1260.3L1158.2 1259.4L1161.9 1258.4L1165.6 1257.3L1169.3 1256.2L1173.0 1255.0L1176.8 1253.8L1180.6 1252.5L1184.3 1251.2L1188.1 1249.8L1191.8 1248.3L1195.6 1246.8L1199.4 1245.3L1203.3 1243.6L1207.2 1241.9L1211.1 1240.1L1215.0 1238.3L1218.8 1236.5L1222.5 1234.7L1226.2 1232.9L1229.7 1231.1L1233.1 1229.3L1236.4 1227.6L1239.5 1225.8L1242.6 1224.1L1245.4 1222.4L1248.2 1220.6L1250.8 1219.0L1253.4 1217.3L1255.8 1215.6L1258.2 1214.0L1260.5 1212.4L1262.8 1210.8L1265.1 1209.1L1267.5 1207.5L1270.0 1205.8L1272.7 1203.9L1275.5 1201.9L1278.2 1199.9L1281.0 1197.9L1283.6 1195.9L1286.2 1194.0L1288.6 1192.2L1290.8 1190.6L1292.8 1189.1L1294.5 1187.9L1295.8 1186.9L1282.2 1167.1L1280.8 1168.0L1279.0 1169.2L1276.9 1170.5L1274.6 1172.0L1272.1 1173.7L1269.4 1175.4L1266.7 1177.2L1263.9 1179.0L1261.1 1180.8L1258.3 1182.6L1255.6 1184.3L1253.1 1185.9L1250.6 1187.5L1248.2 1189.1L1245.8 1190.7L1243.4 1192.2L1241.1 1193.8L1238.8 1195.3L1236.5 1196.8L1234.2 1198.3L1231.7 1199.7L1229.2 1201.2L1226.6 1202.7L1223.8 1204.2L1220.8 1205.8L1217.6 1207.5L1214.3 1209.2L1210.8 1210.9L1207.3 1212.6L1203.7 1214.3L1200.0 1216.0L1196.4 1217.7L1192.7 1219.3L1189.1 1220.8L1185.6 1222.3L1182.2 1223.7L1178.8 1225.0L1175.3 1226.2L1171.9 1227.5L1168.4 1228.6L1164.9 1229.8L1161.5 1230.9L1158.0 1231.9L1154.7 1232.9L1151.3 1233.8L1148.1 1234.7L1144.9 1235.5L1141.8 1236.2L1138.7 1236.8L1135.8 1237.5L1132.9 1238.0L1130.1 1238.5L1127.4 1238.9L1124.7 1239.3L1122.1 1239.6L1119.5 1239.9L1117.0 1240.1L1114.4 1240.2L1111.9 1240.2L1109.4 1240.3L1106.8 1240.2L1104.3 1240.0L1101.6 1239.8L1099.0 1239.6L1096.4 1239.2L1093.7 1238.8L1091.1 1238.4L1088.5 1237.9L1086.0 1237.4L1083.5 1236.8L1081.1 1236.2L1078.7 1235.5L1076.5 1234.9L1074.3 1234.2L1072.3 1233.5L1070.3 1232.8L1068.4 1232.0L1066.5 1231.3L1064.7 1230.4L1063.0 1229.6L1061.3 1228.7L1059.6 1227.7L1058.0 1226.6L1056.4 1225.6L1054.9 1224.4L1053.5 1223.2L1051.9 1221.8L1050.3 1220.2L1048.7 1218.6L1047.0 1216.8L1045.4 1215.0L1043.7 1213.1L1042.0 1211.2L1040.4 1209.3L1038.7 1207.5L1037.0 1205.6L1035.4 1203.9L1033.9 1202.3L1032.4 1200.8L1031.1 1199.4L1029.9 1198.1L1028.7 1196.8L1027.7 1195.6L1026.7 1194.4L1025.8 1193.3L1025.0 1192.2L1024.3 1191.1L1023.5 1189.9L1022.8 1188.6L1022.0 1187.3L1021.2 1185.8L1020.5 1184.4L1019.8 1182.9L1019.1 1181.3L1018.5 1179.7L1017.9 1178.1L1017.3 1176.5L1016.7 1174.9L1016.2 1173.2L1015.7 1171.7L1015.3 1170.3L1015.0 1168.7L1014.6 1166.9L1014.3 1164.9L1014.0 1162.9L1013.7 1160.8L1013.5 1158.8L1013.2 1156.9L1013.0 1155.0L1012.8 1153.3L1012.6 1151.7L1012.4 1150.4Z" fill="#cbc2c2"/>
<path d="M985.9 1154.8L986.1 1155.8L986.3 1157.1L986.6 1158.7L986.9 1160.6L987.2 1162.7L987.6 1164.9L988.0 1167.3L988.4 1169.7L989.0 1172.2L989.5 1174.6L990.2 1177.1L990.9 1179.4L991.6 1181.5L992.4 1183.6L993.2 1185.7L994.0 1187.7L994.9 1189.8L995.9 1191.9L996.8 1193.9L997.9 1195.9L999.0 1197.9L1000.1 1199.9L1001.3 1201.9L1002.6 1203.8L1003.9 1205.7L1005.3 1207.4L1006.7 1209.1L1008.2 1210.7L1009.6 1212.3L1011.1 1213.8L1012.5 1215.2L1014.0 1216.6L1015.5 1218.0L1017.0 1219.4L1018.5 1220.8L1020.0 1222.3L1021.5 1223.8L1023.2 1225.5L1024.9 1227.3L1026.7 1229.1L1028.6 1231.0L1030.5 1233.0L1032.6 1234.9L1034.6 1236.9L1036.8 1238.8L1039.0 1240.7L1041.4 1242.5L1043.7 1244.1L1046.0 1245.6L1048.3 1247.0L1050.7 1248.2L1053.0 1249.4L1055.3 1250.6L1057.7 1251.6L1060.2 1252.6L1062.6 1253.6L1065.1 1254.4L1067.6 1255.3L1070.2 1256.0L1072.8 1256.8L1075.6 1257.5L1078.4 1258.2L1081.2 1258.9L1084.2 1259.5L1087.2 1260.1L1090.2 1260.6L1093.3 1261.0L1096.5 1261.5L1099.6 1261.8L1102.8 1262.0L1105.9 1262.2L1109.1 1262.3L1112.2 1262.3L1115.3 1262.2L1118.4 1262.1L1121.4 1261.8L1124.5 1261.5L1127.6 1261.2L1130.7 1260.7L1133.8 1260.3L1136.9 1259.7L1140.1 1259.1L1143.3 1258.4L1146.6 1257.7L1150.0 1256.9L1153.5 1256.0L1157.1 1255.1L1160.7 1254.1L1164.3 1253.1L1168.0 1251.9L1171.7 1250.8L1175.4 1249.6L1179.1 1248.3L1182.8 1247.0L1186.5 1245.6L1190.2 1244.2L1193.9 1242.7L1197.7 1241.2L1201.5 1239.5L1205.4 1237.8L1209.2 1236.1L1213.1 1234.3L1216.8 1232.5L1220.6 1230.7L1224.2 1228.9L1227.7 1227.1L1231.0 1225.4L1234.3 1223.7L1237.4 1221.9L1240.3 1220.2L1243.1 1218.6L1245.8 1216.9L1248.4 1215.2L1250.9 1213.6L1253.4 1212.0L1255.7 1210.3L1258.1 1208.7L1260.4 1207.1L1262.7 1205.5L1265.1 1203.9L1267.6 1202.1L1270.3 1200.3L1273.0 1198.3L1275.8 1196.4L1278.5 1194.4L1281.2 1192.4L1283.8 1190.5L1286.2 1188.8L1288.5 1187.1L1290.4 1185.7L1292.1 1184.5L1293.5 1183.5L1283.4 1168.9L1282.0 1169.8L1280.2 1171.0L1278.2 1172.3L1275.9 1173.8L1273.4 1175.5L1270.7 1177.2L1268.0 1179.0L1265.2 1180.9L1262.4 1182.7L1259.6 1184.5L1257.0 1186.2L1254.4 1187.9L1251.9 1189.5L1249.5 1191.1L1247.1 1192.7L1244.8 1194.2L1242.5 1195.8L1240.2 1197.3L1237.8 1198.8L1235.5 1200.3L1233.0 1201.8L1230.5 1203.3L1227.8 1204.8L1225.0 1206.4L1221.9 1208.0L1218.7 1209.7L1215.4 1211.4L1211.9 1213.1L1208.3 1214.8L1204.7 1216.5L1201.0 1218.2L1197.4 1219.9L1193.7 1221.5L1190.1 1223.1L1186.5 1224.6L1183.1 1225.9L1179.6 1227.2L1176.2 1228.5L1172.7 1229.8L1169.2 1231.0L1165.7 1232.1L1162.2 1233.2L1158.7 1234.3L1155.3 1235.2L1152.0 1236.2L1148.7 1237.0L1145.5 1237.8L1142.3 1238.6L1139.2 1239.2L1136.3 1239.9L1133.4 1240.4L1130.5 1240.9L1127.8 1241.3L1125.0 1241.7L1122.4 1242.0L1119.7 1242.3L1117.1 1242.5L1114.5 1242.6L1111.9 1242.7L1109.3 1242.7L1106.7 1242.6L1104.1 1242.5L1101.4 1242.3L1098.7 1242.0L1096.0 1241.6L1093.3 1241.2L1090.7 1240.8L1088.0 1240.3L1085.5 1239.7L1082.9 1239.2L1080.5 1238.5L1078.1 1237.9L1075.8 1237.2L1073.6 1236.5L1071.5 1235.8L1069.4 1235.1L1067.5 1234.3L1065.6 1233.5L1063.7 1232.7L1061.9 1231.8L1060.1 1230.8L1058.4 1229.8L1056.7 1228.7L1055.0 1227.6L1053.4 1226.5L1051.8 1225.2L1050.2 1223.7L1048.6 1222.1L1046.9 1220.4L1045.2 1218.6L1043.5 1216.8L1041.8 1214.9L1040.1 1213.1L1038.4 1211.2L1036.7 1209.3L1035.1 1207.5L1033.5 1205.8L1031.9 1204.3L1030.5 1202.8L1029.1 1201.4L1027.9 1200.0L1026.7 1198.8L1025.6 1197.5L1024.6 1196.3L1023.6 1195.1L1022.7 1194.0L1021.9 1192.8L1021.1 1191.5L1020.3 1190.2L1019.5 1188.7L1018.7 1187.2L1017.9 1185.7L1017.1 1184.1L1016.4 1182.5L1015.7 1180.9L1015.1 1179.2L1014.5 1177.6L1013.9 1175.9L1013.3 1174.2L1012.8 1172.6L1012.4 1171.1L1012.0 1169.4L1011.6 1167.5L1011.3 1165.5L1010.9 1163.4L1010.6 1161.3L1010.4 1159.3L1010.1 1157.3L1009.9 1155.4L1009.7 1153.7L1009.5 1152.1L1009.3 1150.9Z" fill="#e9e3e3" filter="url(#b1)"/>
<path d="M992.9 1153.6L993.1 1154.7L993.3 1156.1L993.5 1157.7L993.8 1159.6L994.1 1161.7L994.5 1163.9L994.9 1166.1L995.3 1168.4L995.8 1170.8L996.3 1173.1L996.9 1175.3L997.5 1177.4L998.1 1179.3L998.8 1181.3L999.6 1183.2L1000.4 1185.2L1001.2 1187.1L1002.0 1189.1L1003.0 1191.0L1003.9 1192.9L1004.9 1194.7L1005.9 1196.5L1007.0 1198.3L1008.2 1200.1L1009.3 1201.8L1010.6 1203.4L1011.8 1204.9L1013.1 1206.4L1014.4 1207.8L1015.8 1209.2L1017.2 1210.6L1018.6 1212.0L1020.0 1213.4L1021.5 1214.8L1023.0 1216.3L1024.6 1217.8L1026.2 1219.4L1027.8 1221.1L1029.5 1222.9L1031.3 1224.8L1033.1 1226.7L1035.0 1228.6L1036.9 1230.5L1038.9 1232.4L1040.9 1234.2L1043.0 1235.9L1045.1 1237.6L1047.2 1239.1L1049.3 1240.4L1051.4 1241.7L1053.6 1242.9L1055.7 1244.0L1057.9 1245.1L1060.1 1246.1L1062.4 1247.0L1064.7 1247.9L1067.1 1248.7L1069.5 1249.5L1071.9 1250.2L1074.5 1251.0L1077.1 1251.7L1079.8 1252.3L1082.5 1253.0L1085.4 1253.6L1088.3 1254.1L1091.2 1254.6L1094.2 1255.1L1097.2 1255.5L1100.2 1255.8L1103.2 1256.0L1106.2 1256.2L1109.2 1256.3L1112.1 1256.3L1115.1 1256.2L1118.0 1256.0L1120.9 1255.8L1123.8 1255.5L1126.8 1255.2L1129.8 1254.8L1132.8 1254.3L1135.8 1253.8L1138.9 1253.2L1142.1 1252.5L1145.3 1251.8L1148.6 1251.0L1152.0 1250.2L1155.5 1249.3L1159.0 1248.3L1162.6 1247.3L1166.2 1246.2L1169.8 1245.0L1173.5 1243.8L1177.1 1242.6L1180.8 1241.3L1184.4 1240.0L1188.0 1238.6L1191.6 1237.1L1195.4 1235.6L1199.1 1234.0L1202.9 1232.3L1206.7 1230.6L1210.5 1228.8L1214.2 1227.1L1217.9 1225.3L1221.5 1223.5L1224.9 1221.7L1228.2 1220.0L1231.4 1218.3L1234.4 1216.7L1237.3 1215.0L1240.0 1213.4L1242.6 1211.8L1245.2 1210.2L1247.6 1208.6L1250.0 1207.0L1252.4 1205.4L1254.7 1203.8L1257.0 1202.2L1259.4 1200.6L1261.8 1198.9L1264.3 1197.2L1267.0 1195.4L1269.7 1193.5L1272.5 1191.6L1275.3 1189.6L1278.0 1187.7L1280.6 1185.9L1283.0 1184.1L1285.2 1182.5L1287.2 1181.1L1288.9 1179.9L1290.3 1178.9L1285.4 1171.8L1284.0 1172.7L1282.3 1173.9L1280.2 1175.3L1277.9 1176.9L1275.5 1178.5L1272.8 1180.3L1270.1 1182.2L1267.3 1184.0L1264.5 1185.9L1261.8 1187.7L1259.1 1189.5L1256.6 1191.1L1254.1 1192.8L1251.7 1194.4L1249.4 1196.0L1247.0 1197.5L1244.7 1199.1L1242.4 1200.6L1240.0 1202.2L1237.6 1203.7L1235.1 1205.3L1232.5 1206.8L1229.8 1208.4L1226.9 1209.9L1223.8 1211.6L1220.6 1213.3L1217.2 1215.0L1213.7 1216.7L1210.1 1218.5L1206.4 1220.2L1202.7 1221.9L1199.0 1223.6L1195.3 1225.2L1191.7 1226.8L1188.1 1228.3L1184.5 1229.7L1181.0 1231.0L1177.5 1232.3L1174.0 1233.6L1170.4 1234.8L1166.9 1236.0L1163.4 1237.1L1159.9 1238.1L1156.4 1239.1L1153.0 1240.1L1149.7 1240.9L1146.4 1241.8L1143.2 1242.5L1140.1 1243.2L1137.0 1243.8L1134.1 1244.4L1131.2 1244.9L1128.4 1245.3L1125.6 1245.7L1122.8 1246.1L1120.1 1246.3L1117.4 1246.5L1114.7 1246.7L1112.0 1246.7L1109.3 1246.7L1106.6 1246.7L1103.8 1246.5L1101.0 1246.3L1098.3 1246.0L1095.5 1245.6L1092.7 1245.2L1090.0 1244.8L1087.2 1244.2L1084.6 1243.7L1082.0 1243.1L1079.5 1242.4L1077.0 1241.8L1074.6 1241.1L1072.4 1240.4L1070.2 1239.7L1068.0 1238.9L1066.0 1238.1L1063.9 1237.3L1062.0 1236.4L1060.1 1235.4L1058.2 1234.4L1056.3 1233.4L1054.5 1232.2L1052.7 1231.0L1050.9 1229.8L1049.2 1228.4L1047.4 1226.8L1045.7 1225.2L1043.9 1223.4L1042.1 1221.6L1040.4 1219.8L1038.6 1217.9L1036.9 1216.0L1035.2 1214.2L1033.5 1212.4L1031.9 1210.6L1030.3 1209.0L1028.8 1207.4L1027.3 1206.0L1026.0 1204.6L1024.6 1203.2L1023.4 1201.9L1022.2 1200.6L1021.1 1199.4L1020.1 1198.1L1019.1 1196.8L1018.1 1195.5L1017.2 1194.1L1016.3 1192.6L1015.4 1191.1L1014.5 1189.5L1013.6 1187.9L1012.8 1186.2L1012.1 1184.5L1011.3 1182.8L1010.6 1181.1L1009.9 1179.3L1009.3 1177.5L1008.7 1175.8L1008.1 1174.1L1007.7 1172.3L1007.2 1170.5L1006.8 1168.5L1006.4 1166.4L1006.0 1164.2L1005.7 1162.1L1005.4 1160.0L1005.1 1158.0L1004.9 1156.1L1004.7 1154.4L1004.4 1152.9L1004.3 1151.7Z" fill="#fcfafa" filter="url(#b2)"/>
<path d="M996.6 1153.0L996.8 1154.1L997.0 1155.6L997.2 1157.2L997.5 1159.1L997.8 1161.1L998.1 1163.3L998.5 1165.5L998.9 1167.8L999.3 1170.0L999.8 1172.2L1000.3 1174.3L1000.9 1176.3L1001.5 1178.2L1002.2 1180.1L1002.9 1182.0L1003.6 1183.9L1004.4 1185.8L1005.2 1187.6L1006.1 1189.5L1007.0 1191.3L1007.9 1193.1L1008.9 1194.8L1009.9 1196.5L1011.0 1198.2L1012.1 1199.8L1013.2 1201.3L1014.4 1202.8L1015.6 1204.2L1016.9 1205.6L1018.2 1207.0L1019.5 1208.3L1020.9 1209.7L1022.3 1211.1L1023.7 1212.5L1025.2 1214.0L1026.8 1215.6L1028.4 1217.3L1030.1 1219.0L1031.8 1220.8L1033.5 1222.7L1035.3 1224.6L1037.1 1226.5L1039.0 1228.4L1040.9 1230.2L1042.8 1232.0L1044.8 1233.7L1046.8 1235.3L1048.8 1236.7L1050.8 1238.0L1052.9 1239.3L1054.9 1240.4L1057.0 1241.5L1059.1 1242.5L1061.3 1243.5L1063.4 1244.4L1065.7 1245.3L1068.0 1246.1L1070.3 1246.8L1072.7 1247.6L1075.2 1248.3L1077.8 1249.0L1080.4 1249.6L1083.1 1250.3L1085.9 1250.9L1088.8 1251.4L1091.6 1251.9L1094.5 1252.3L1097.5 1252.7L1100.4 1253.0L1103.4 1253.3L1106.3 1253.4L1109.2 1253.5L1112.1 1253.5L1115.0 1253.4L1117.8 1253.3L1120.7 1253.1L1123.5 1252.8L1126.4 1252.4L1129.4 1252.0L1132.3 1251.6L1135.3 1251.0L1138.4 1250.4L1141.5 1249.8L1144.7 1249.1L1148.0 1248.3L1151.3 1247.5L1154.8 1246.6L1158.3 1245.6L1161.8 1244.6L1165.4 1243.5L1169.0 1242.4L1172.6 1241.2L1176.2 1240.0L1179.8 1238.7L1183.4 1237.4L1187.0 1236.0L1190.6 1234.6L1194.3 1233.0L1198.0 1231.4L1201.8 1229.8L1205.6 1228.1L1209.3 1226.3L1213.0 1224.6L1216.7 1222.8L1220.2 1221.0L1223.7 1219.3L1227.0 1217.6L1230.1 1215.9L1233.1 1214.3L1235.9 1212.7L1238.6 1211.0L1241.2 1209.5L1243.7 1207.9L1246.1 1206.3L1248.5 1204.7L1250.8 1203.1L1253.2 1201.5L1255.5 1199.9L1257.9 1198.3L1260.3 1196.7L1262.8 1195.0L1265.5 1193.2L1268.3 1191.3L1271.0 1189.4L1273.8 1187.5L1276.5 1185.6L1279.2 1183.8L1281.6 1182.1L1283.9 1180.6L1285.9 1179.1L1287.6 1178.0L1289.0 1177.0" fill="none" stroke="#aea4a4" stroke-opacity="0.28" stroke-width="34.0" stroke-dasharray="1.2 1.7" clip-path="url(#cv)"/>
</svg>
</body>
</html>
